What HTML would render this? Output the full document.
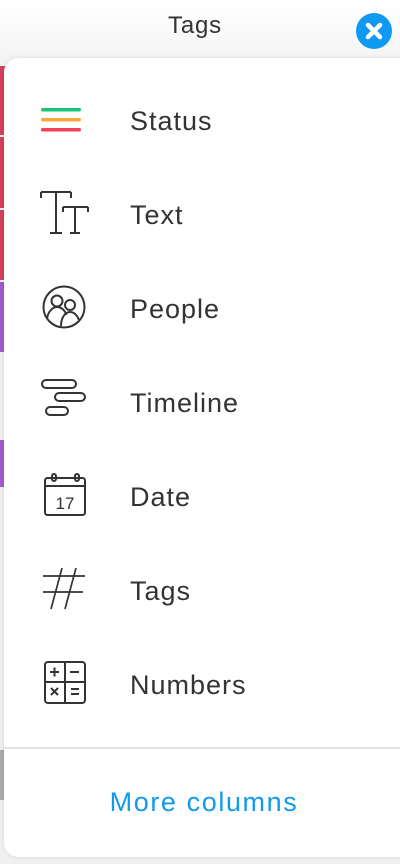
<!DOCTYPE html>
<html><head><style>
body{margin:0;width:400px;height:864px;overflow:hidden;background:#f0f0f0;font-family:"Liberation Sans",sans-serif;position:relative}
.top{position:absolute;left:0;top:0;width:400px;height:70px;background:linear-gradient(#fff,#f2f2f2)}
.title{position:absolute;left:0;width:390px;top:12px;text-align:center;font-size:24px;letter-spacing:0.8px;color:#333}
.close{position:absolute;left:356px;top:13px;width:36px;height:36px;border-radius:50%;background:#0f9af0}
.strip{position:absolute;left:0;width:6px}
.card{position:absolute;left:4px;top:58px;width:410px;height:799px;background:#fff;border-radius:14px;box-shadow:0 0 4px rgba(0,0,0,.12)}
.row{position:absolute;left:130px;font-size:27px;letter-spacing:1px;color:#333;line-height:30px}
svg.ic{position:absolute;left:40px}
.div{position:absolute;left:4px;top:747px;width:396px;height:2px;background:#e4e4e4}
.more{position:absolute;left:0;width:408px;top:787px;text-align:center;font-size:27px;letter-spacing:1.6px;color:#0f9af0}
</style></head><body>
<div class="top"></div>
<div class="title">Tags</div>
<div class="close"><svg width="36" height="36"><path d="M12 12L24 24M24 12L12 24" stroke="#fff" stroke-width="4.5" stroke-linecap="round"/></svg></div>
<div class="strip" style="top:66px;height:69px;background:#d6405c"></div>
<div class="strip" style="top:137px;height:71px;background:#d6405c"></div>
<div class="strip" style="top:210px;height:70px;background:#d6405c"></div>
<div class="strip" style="top:282px;height:70px;background:#a25ccc"></div>
<div class="strip" style="top:440px;height:47px;background:#a25ccc"></div>
<div class="strip" style="top:750px;height:50px;background:#aaa"></div>
<div class="card"></div>
<svg class="ic" style="top:105px" width="44" height="32"><rect x="1" y="3" width="40" height="3.5" rx="1.7" fill="#17c47a"/><rect x="1" y="13" width="40" height="3.5" rx="1.7" fill="#fba73c"/><rect x="1" y="23" width="40" height="3.5" rx="1.7" fill="#f5415a"/></svg>
<div class="row" style="top:106px">Status</div>
<svg class="ic" style="top:190px" width="50" height="46" fill="none" stroke="#333" stroke-width="2"><path d="M1 2h30M16 2v41M10 43h12M1 2v6M31 2v6M23 17h25M35 17v26M30 43h10M23 17v5M48 17v5"/></svg>
<div class="row" style="top:200px">Text</div>
<svg class="ic" style="top:285px" width="48" height="48" fill="none" stroke="#333" stroke-width="2"><circle cx="24" cy="22" r="20.5"/><circle cx="17" cy="16" r="5.5"/><circle cx="30" cy="20" r="5"/><path d="M7 34c1-8 6-12 10-12s9 4 9 8M21 41c0-8 4-14 9-14s8 5 9 8"/></svg>
<div class="row" style="top:294px">People</div>
<svg class="ic" style="top:378px" width="50" height="46" fill="none" stroke="#333" stroke-width="2"><rect x="2" y="2" width="34" height="8" rx="4"/><rect x="15" y="15" width="30" height="8" rx="4"/><rect x="6" y="29" width="22" height="8" rx="4"/></svg>
<div class="row" style="top:388px">Timeline</div>
<svg class="ic" style="top:472px" width="48" height="46" fill="none" stroke="#333" stroke-width="2"><rect x="5" y="6" width="40" height="37" rx="2.5"/><path d="M5 14h40"/><rect x="12" y="2" width="4" height="7" rx="2"/><rect x="35" y="2" width="4" height="7" rx="2"/><text x="25" y="37" font-size="17" fill="#333" stroke="none" text-anchor="middle" font-family="Liberation Sans">17</text></svg>
<div class="row" style="top:482px">Date</div>
<svg class="ic" style="top:566px" width="48" height="44" fill="none" stroke="#333" stroke-width="1.7"><path d="M3 10h42M3 26h40M22 2L11 43M36 2L25 43"/></svg>
<div class="row" style="top:576px">Tags</div>
<svg class="ic" style="top:660px" width="48" height="46" fill="none" stroke="#333" stroke-width="2"><rect x="5" y="2" width="40" height="41" rx="3"/><path d="M25 2v41M5 22h40M10 12h9M14.5 7.5v9M30 12h9M11 28l7 7M18 28l-7 7M31 29h8M31 34h8"/></svg>
<div class="row" style="top:670px">Numbers</div>
<div class="div"></div>
<div class="more">More columns</div>
</body></html>
